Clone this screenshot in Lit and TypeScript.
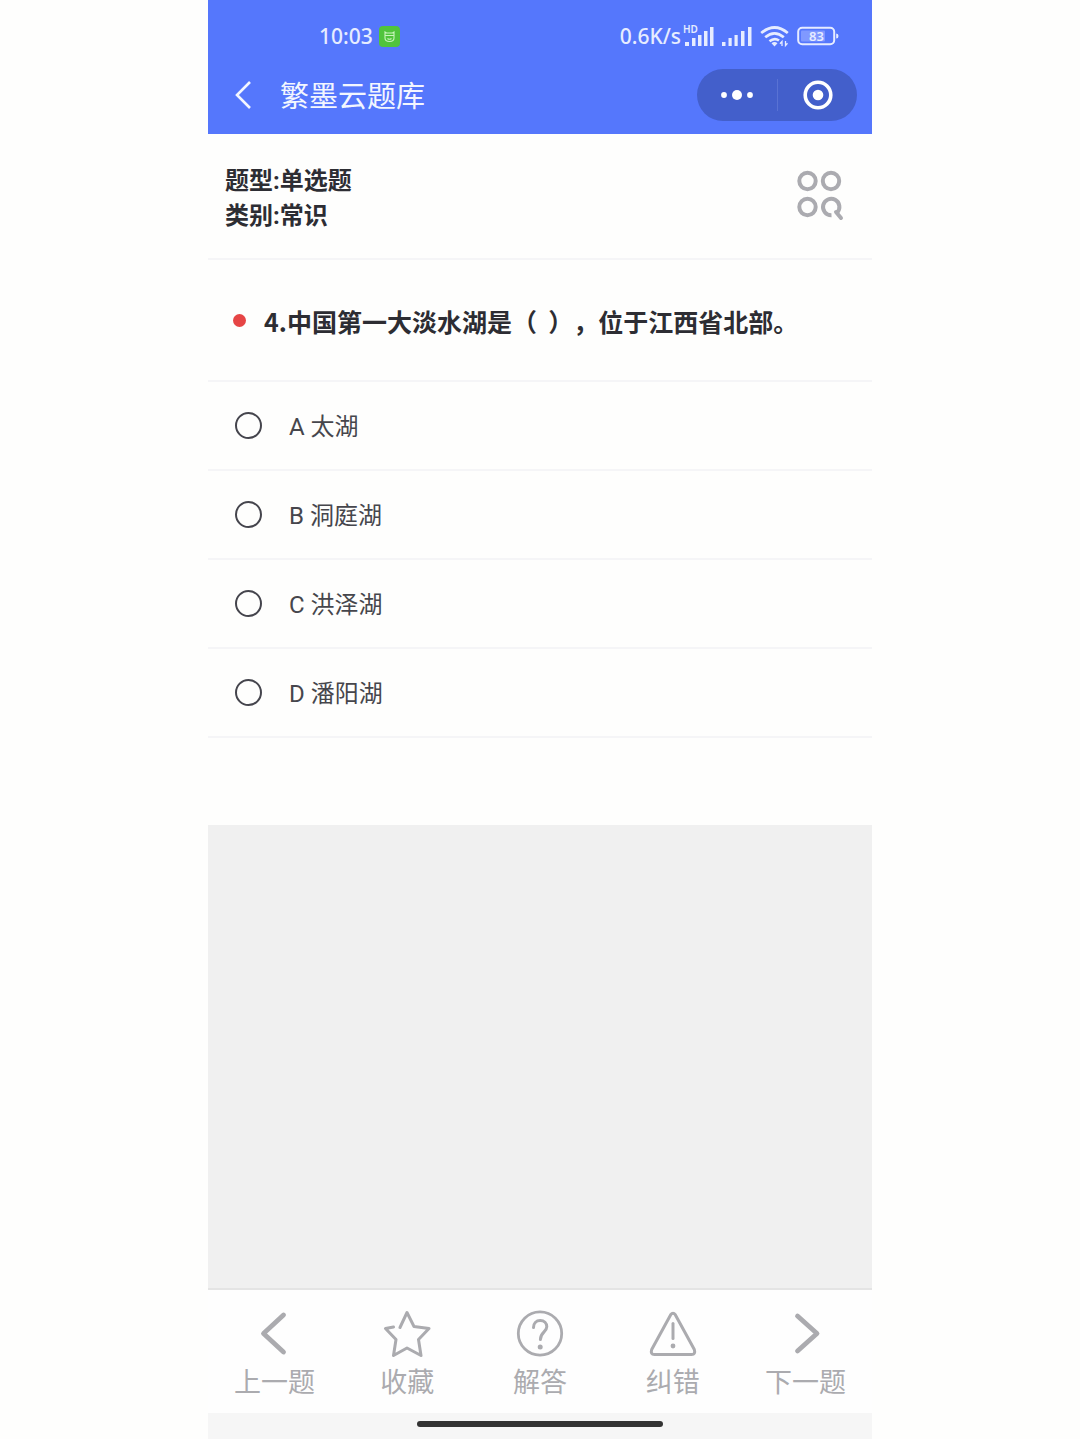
import { LitElement, html, css, svg } from "lit";
import { customElement, property, state } from "lit/decorators.js";

interface Option {
  key: string;
  text: string;
}

const OPTIONS: Option[] = [
  { key: "A", text: "太湖" },
  { key: "B", text: "洞庭湖" },
  { key: "C", text: "洪泽湖" },
  { key: "D", text: "潘阳湖" },
];

const TABS = [
  {
    label: "上一题",
    icon: svg`<path d="M33.500 6 13.500 24.500 33.500 43" stroke-width="4.800"/>`,
  },
  {
    label: "收藏",
    icon: svg`<path d="M17 18.500 24 3.500 31 17.500 46 19.500 35.500 30.500 38 46.500 24 39 10.500 46.500 13 30.500 2.500 19.500 10.500 18" stroke-width="3"/>`,
  },
  {
    label: "解答",
    icon: svg`<circle cx="24" cy="24.500" r="21.700" stroke-width="2.800"/><path d="M17.500 18.500c0-4 2.700-7 6.700-7s6.600 2.800 6.600 6.300c0 5-6.400 5.500-6.400 12.700" stroke-width="3"/><circle cx="24.200" cy="38" r="2.500" fill="currentColor" stroke="none"/>`,
  },
  {
    label: "纠错",
    icon: svg`<path d="M21.700 5.700Q24 2.700 26.300 5.700L45.300 40.500Q46.800 45.300 42.500 45.500H5.500Q1.200 45.300 2.700 40.500Z" stroke-width="3"/><path d="M24 14.500V29.500" stroke-width="3"/><circle cx="24" cy="37" r="2.400" fill="currentColor" stroke="none"/>`,
  },
  {
    label: "下一题",
    icon: svg`<path d="M15.500 7 35 24.500 15.500 42" stroke-width="4.800"/>`,
  },
];

@customElement("status-bar")
class StatusBar extends LitElement {
  static styles = css`
    :host {
      display: flex;
      align-items: center;
      justify-content: space-between;
      height: 72px;
      padding: 0 33px 0 111px;
      box-sizing: border-box;
      color: #e6ecff;
      font: 500 21px/28px "Noto Sans", sans-serif;
    }
    .group {
      display: flex;
      align-items: center;
    }
    .left {
      gap: 6px;
    }
    .right {
      gap: 8px;
    }
    .speed {
      display: flex;
      align-items: center;
      gap: 2px;
    }
    svg {
      display: block;
      flex: none;
      overflow: visible;
    }
    .tiny {
      font: 600 10px "Noto Sans", sans-serif;
    }
    .level {
      font: 600 13px "Noto Sans", sans-serif;
    }
  `;

  render() {
    return html`
      <div class="group left">
        <span>10:03</span>
        <svg width="21" height="21" viewBox="0 0 21 21" fill="none" aria-hidden="true">
          <rect width="21" height="21" rx="4" fill="#50c43c" />
          <path d="M6 6 7.500 7H13.500L15 6V12Q15 15.500 10.500 15.500T6 12Z M6.500 9.500H14.500 M8.500 12.500Q10.500 14 12.500 12.500" stroke="#c9f5bd" stroke-width="1.100" />
        </svg>
      </div>
      <div class="group right">
        <div class="speed">
          <span>0.6K/s</span>
          <svg width="31" height="26" viewBox="0 0 31 26" fill="currentColor" aria-hidden="true">
            <text class="tiny" x="0" y="10">HD</text>
            <path d="M2 19h4v4h-4zM9 15h3.500v8h-3.500zM15 12h3.500v11h-3.500zM21 8h3.500v15h-3.500zM27 4h3.500v19h-3.500z" />
          </svg>
        </div>
        <svg width="30" height="22" viewBox="0 0 30 22" fill="currentColor" aria-hidden="true">
          <path d="M0 17h3.500v4h-3.500zM6.500 13h3.200v8h-3.200zM12.500 10h3.200v11h-3.200zM19 6h3.500v15h-3.500zM26 2h3.500v19h-3.500z" />
        </svg>
        <svg width="29" height="22" viewBox="0 0 29 22" fill="none" stroke="currentColor" stroke-width="2.700" aria-hidden="true">
          <path d="M1.200 8Q14.500-3 27.800 8M5.200 12.300Q14.500 4.500 23.800 12.300M9.500 16.300Q14.500 12.200 19 15.500" />
          <path d="M11.500 18.300Q14.500 15.500 17.500 18.300L14.500 21.500Z" fill="currentColor" stroke="none" />
          <path d="M22 21V16.500L20 18.800M25.500 16V20.500L27.500 18.200" stroke-width="1.300" />
        </svg>
        <svg width="42" height="20" viewBox="0 0 42 20" fill="none" aria-label="83">
          <rect x="1.200" y="1.700" width="36" height="16.600" rx="4" stroke="currentColor" stroke-width="2" />
          <rect x="4" y="4.500" width="24" height="11" rx="1" fill="#8099ff" />
          <path d="M39.200 7.500Q41.500 7.500 41.500 10T39.200 12.500Z" fill="currentColor" />
          <text class="level" x="19.500" y="14.700" text-anchor="middle" fill="currentColor">83</text>
        </svg>
      </div>
    `;
  }
}

@customElement("nav-header")
class NavHeader extends LitElement {
  @property() heading = "";

  static styles = css`
    :host {
      display: flex;
      align-items: center;
      padding: 0 15px 13px 16px;
      color: #f3f6ff;
    }
    button {
      display: flex;
      align-items: center;
      justify-content: center;
      padding: 0;
      border: 0;
      background: none;
      color: inherit;
      cursor: pointer;
    }
    .back {
      width: 38px;
      height: 48px;
    }
    h1 {
      flex: 1;
      margin: 0 0 0 18px;
      padding-bottom: 2px;
      font: 400 29px/40px "Noto Sans CJK SC", sans-serif;
    }
    .capsule {
      display: grid;
      grid-template-columns: 1fr 1px 1fr;
      align-items: center;
      width: 160px;
      height: 52px;
      border-radius: 26px;
      background: #435fcb;
      color: #fff;
    }
    .capsule button {
      height: 52px;
    }
    .divider {
      height: 32px;
      background: #5972d4;
    }
  `;

  render() {
    return html`
      <button class="back" aria-label="返回">
        <svg width="18" height="30" viewBox="0 0 18 30" fill="none" stroke="currentColor" stroke-width="2.600" aria-hidden="true">
          <path d="M16 2 3 15 16 28" />
        </svg>
      </button>
      <h1>${this.heading}</h1>
      <div class="capsule">
        <button aria-label="更多">
          <svg width="32" height="12" viewBox="0 0 32 12" fill="currentColor" aria-hidden="true">
            <circle cx="3" cy="6" r="2.900" />
            <circle cx="16" cy="6" r="5" />
            <circle cx="29" cy="6" r="2.900" />
          </svg>
        </button>
        <span class="divider"></span>
        <button aria-label="关闭">
          <svg width="32" height="30" viewBox="0 0 32 30" fill="none" aria-hidden="true">
            <circle cx="17" cy="15" r="12.800" stroke="currentColor" stroke-width="3.600" />
            <circle cx="17" cy="15" r="5.300" fill="currentColor" />
          </svg>
        </button>
      </div>
    `;
  }
}

@customElement("tab-bar")
class TabBar extends LitElement {
  static styles = css`
    :host {
      display: block;
      background: #fefefe;
      border-top: 2px solid #e4e4e4;
    }
    nav {
      display: grid;
      grid-template-columns: repeat(5, 1fr);
      padding: 19px 0 13px;
    }
    button {
      display: flex;
      flex-direction: column;
      align-items: center;
      gap: 5px;
      padding: 0;
      border: 0;
      background: none;
      color: #ababaf;
      font: 400 27px/38px "Noto Sans CJK SC", sans-serif;
      cursor: pointer;
    }
    svg {
      display: block;
    }
  `;

  render() {
    return html`
      <nav>
        ${TABS.map(
          (tab) => html`
            <button>
              <svg width="48" height="48" viewBox="0 0 48 48" fill="none" stroke="currentColor" stroke-linecap="round" stroke-linejoin="round" aria-hidden="true">
                ${tab.icon}
              </svg>
              <span>${tab.label}</span>
            </button>
          `
        )}
      </nav>
    `;
  }
}

@customElement("app-root")
class AppRoot extends LitElement {
  @state() private selected = "";

  static styles = css`
    :host {
      display: block;
      background: #fefefd;
      color: #2d2d33;
      font-family: Roboto, "Noto Sans CJK SC", sans-serif;
    }
    .screen {
      display: flex;
      flex-direction: column;
      max-width: 664px;
      min-height: 100vh;
      margin: 0 auto;
      background: #f0f0f0;
    }
    .top {
      background: #5577fc;
    }
    .nav {
      margin-top: -3px;
    }
    .sheet {
      padding-bottom: 87px;
      background: #fefefd;
    }
    .meta {
      display: flex;
      align-items: center;
      justify-content: space-between;
      padding: 30px 27px 24px 17px;
      border-bottom: 2px solid #f5f5f7;
    }
    .facts {
      margin: 0;
      font-size: 24px;
      line-height: 35px;
      font-weight: 700;
    }
    .search {
      display: flex;
      padding: 0;
      border: 0;
      background: none;
      color: #ababb0;
      cursor: pointer;
    }
    .quiz {
      margin: 0;
      padding: 0;
      border: 0;
      min-width: 0;
    }
    .question {
      display: flex;
      align-items: center;
      gap: 18px;
      width: 100%;
      box-sizing: border-box;
      padding: 44px 25px 41px;
      border-bottom: 2px solid #f5f5f7;
      font: 700 25px/35px "Noto Sans CJK SC", sans-serif;
      text-spacing-trim: space-all;
    }
    .dot {
      flex: none;
      width: 13px;
      height: 13px;
      margin-bottom: 3px;
      border-radius: 50%;
      background: #e64545;
    }
    .option {
      display: flex;
      align-items: center;
      gap: 27px;
      padding: 24px 27px;
      border-bottom: 2px solid #f5f5f7;
      color: #46464c;
      font-size: 24px;
      line-height: 35px;
      cursor: pointer;
    }
    .option span {
      padding-top: 4px;
    }
    .option input {
      appearance: none;
      flex: none;
      box-sizing: border-box;
      width: 27px;
      height: 27px;
      margin: 0;
      border: 2px solid #45454d;
      border-radius: 50%;
    }
    .option input:checked {
      border-width: 8px;
      border-color: #5577fc;
    }
    .filler {
      flex: 1;
    }
    .home {
      display: flex;
      justify-content: center;
      padding: 8px 0 12px;
      background: #f6f6f6;
    }
    .handle {
      width: 37%;
      height: 6px;
      border-radius: 3px;
      background: #333;
    }
  `;

  render() {
    return html`
      <div class="screen">
        <header class="top">
          <status-bar></status-bar>
          <nav-header class="nav" heading="繁墨云题库"></nav-header>
        </header>
        <main class="sheet">
          <section class="meta">
            <p class="facts">题型:单选题<br />类别:常识</p>
            <button class="search" aria-label="题目列表">
              <svg width="50" height="60" viewBox="0 0 50 60" fill="none" stroke="currentColor" stroke-width="4" aria-hidden="true">
                <circle cx="12.500" cy="12" r="8.200" />
                <circle cx="36" cy="12" r="8.200" />
                <circle cx="12.500" cy="38" r="8.200" />
                <path d="M36.500 46.200A8.200 8.200 0 1 1 42 43.800" />
                <path d="M41 43 46 49" stroke-linecap="round" />
              </svg>
            </button>
          </section>
          <fieldset class="quiz">
            <legend class="question">
              <span class="dot"></span>
              <span>4.中国第一大淡水湖是（&nbsp; ），位于江西省北部。</span>
            </legend>
            ${OPTIONS.map(
              (option) => html`
                <label class="option">
                  <input
                    type="radio"
                    name="answer"
                    .value=${option.key}
                    .checked=${this.selected === option.key}
                    @change=${() => (this.selected = option.key)}
                  />
                  <span>${option.key} ${option.text}</span>
                </label>
              `
            )}
          </fieldset>
        </main>
        <div class="filler"></div>
        <tab-bar></tab-bar>
        <div class="home"><span class="handle"></span></div>
      </div>
    `;
  }
}
